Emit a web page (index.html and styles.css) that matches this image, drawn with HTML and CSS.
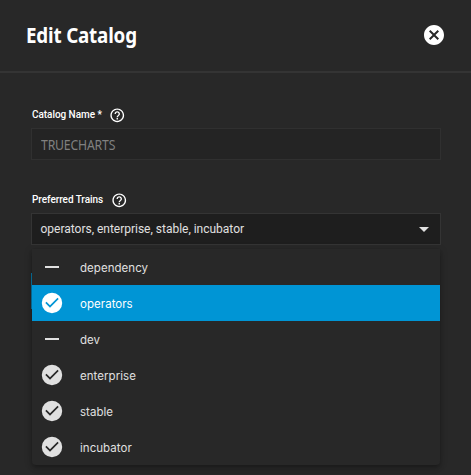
FILE: index.html
```html
<!DOCTYPE html>
<html lang="en">
<head>
<meta charset="utf-8">
<title>Edit Catalog</title>
<link rel="stylesheet" href="styles.css">
</head>
<body>
<svg class="defs" width="0" height="0" aria-hidden="true">
  <symbol id="check" viewBox="0 0 24 24"><path d="M12 1.800A10.200 10.200 0 1 0 12 22.200A10.200 10.200 0 1 0 12 1.800M10 16.700L5.300 12L6.500 10.800L10 14.300L17.500 6.800L18.700 8L10 16.700Z"/></symbol>
  <symbol id="minus" viewBox="0 0 24 24"><path d="M5 11H19V13H5Z"/></symbol>
  <symbol id="help" viewBox="0 0 24 24"><path d="M11 18h2v-2h-2v2zm1-16C6.480 2 2 6.480 2 12s4.480 10 10 10 10-4.480 10-10S17.520 2 12 2zm0 18c-4.410 0-8-3.590-8-8s3.590-8 8-8 8 3.590 8 8-3.590 8-8 8zm0-14c-2.210 0-4 1.790-4 4h2c0-1.100.9-2 2-2s2 .9 2 2c0 2-3 1.750-3 5h2c0-2.250 3-2.500 3-5 0-2.210-1.790-4-4-4z"/></symbol>
</svg>
<header class="header">
  <h1 class="title">Edit Catalog</h1>
  <svg class="close" viewBox="0 0 24 24"><path d="M12 2C6.470 2 2 6.470 2 12s4.470 10 10 10 10-4.470 10-10S17.530 2 12 2zm5 13.590L15.590 17 12 13.410 8.410 17 7 15.590 10.590 12 7 8.410 8.410 7 12 10.590 15.590 7 17 8.410 13.410 12 17 15.590z"/></svg>
</header>
<main class="form">
  <div class="label name-label"><span>Catalog Name *</span><svg class="help"><use href="#help"/></svg></div>
  <div class="field disabled"><span class="name-value">TRUECHARTS</span></div>
  <div class="label trains-label"><span>Preferred Trains</span><svg class="help"><use href="#help"/></svg></div>
  <div class="field select"><span class="trains-value">operators, enterprise, stable, incubator</span><i class="arrow"></i></div>
  <div class="save"></div>
  <ul class="menu">
    <li class="option"><svg class="icon"><use href="#minus"/></svg><span>dependency</span></li>
    <li class="option active"><svg class="icon"><use href="#check"/></svg><span>operators</span></li>
    <li class="option"><svg class="icon"><use href="#minus"/></svg><span>dev</span></li>
    <li class="option"><svg class="icon"><use href="#check"/></svg><span>enterprise</span></li>
    <li class="option"><svg class="icon"><use href="#check"/></svg><span>stable</span></li>
    <li class="option"><svg class="icon"><use href="#check"/></svg><span>incubator</span></li>
  </ul>
</main>
</body>
</html>
```
FILE: styles.css
```css
* { box-sizing: border-box; }
body { margin: 0; height: 475px; overflow: hidden; background: #282828; color: #fff; font-family: Roboto, sans-serif; }
svg { display: block; fill: currentColor; }
.defs { position: absolute; }
.header { height: 73px; padding: 0 25px 2px 26px; display: flex; align-items: center; justify-content: space-between; border-bottom: 2px solid #343434; }
.title { margin: 0; font: 700 20.5px/30px "Noto Sans", sans-serif; letter-spacing: -0.2px; transform: scaleX(.917); transform-origin: left; }
.close { width: 24px; height: 24px; }
.form { position: relative; padding: 33px 30px 0 31px; }
.label { display: flex; align-items: center; height: 18px; padding-left: 1px; font-size: 10px; font-weight: 500; }
.label span { margin-top: -1px; letter-spacing: -.05px; }
.help { width: 16.500px; height: 16.500px; margin-left: 7.500px; }
.field { height: 32px; border: 1px solid #303030; display: flex; align-items: center; padding: 0 11px 0 9px; background: #242424; }
.name-label { margin-bottom: 4px; }
.name-value { color: #808080; font: 14px "Noto Sans", sans-serif; letter-spacing: -.2px; transform: scaleX(.875); transform-origin: left; }
.trains-label { margin: 31px 0 4px; }
.select { background: #1e1e1e; border-color: #343434; justify-content: space-between; font-size: 12px; color: #e0e0e0; }
.trains-value { letter-spacing: -.01px; margin-left: -.5px; }
.arrow { border: 5px solid transparent; border-top-color: #e0e0e0; border-bottom: 0; }
.save { height: 36px; margin-top: 28px; border-left: 1px solid #0878a8; }
.menu { position: absolute; left: 32px; top: 176px; width: 408px; margin: 0; padding: 0; list-style: none; background: #282828; border-radius: 0 0 4px 4px; box-shadow: 0 2px 4px -1px rgba(0,0,0,.2), 0 4px 5px rgba(0,0,0,.14), 0 1px 10px rgba(0,0,0,.12); }
.option { height: 36px; display: flex; align-items: center; padding-left: 8px; color: #e0e0e0; font: 11.500px Inter, sans-serif; letter-spacing: .04px; }
.option span { padding-top: 1px; }
.icon { width: 24px; height: 24px; margin-right: 16px; }
.active { background: #0095d5; color: #fff; }
```
